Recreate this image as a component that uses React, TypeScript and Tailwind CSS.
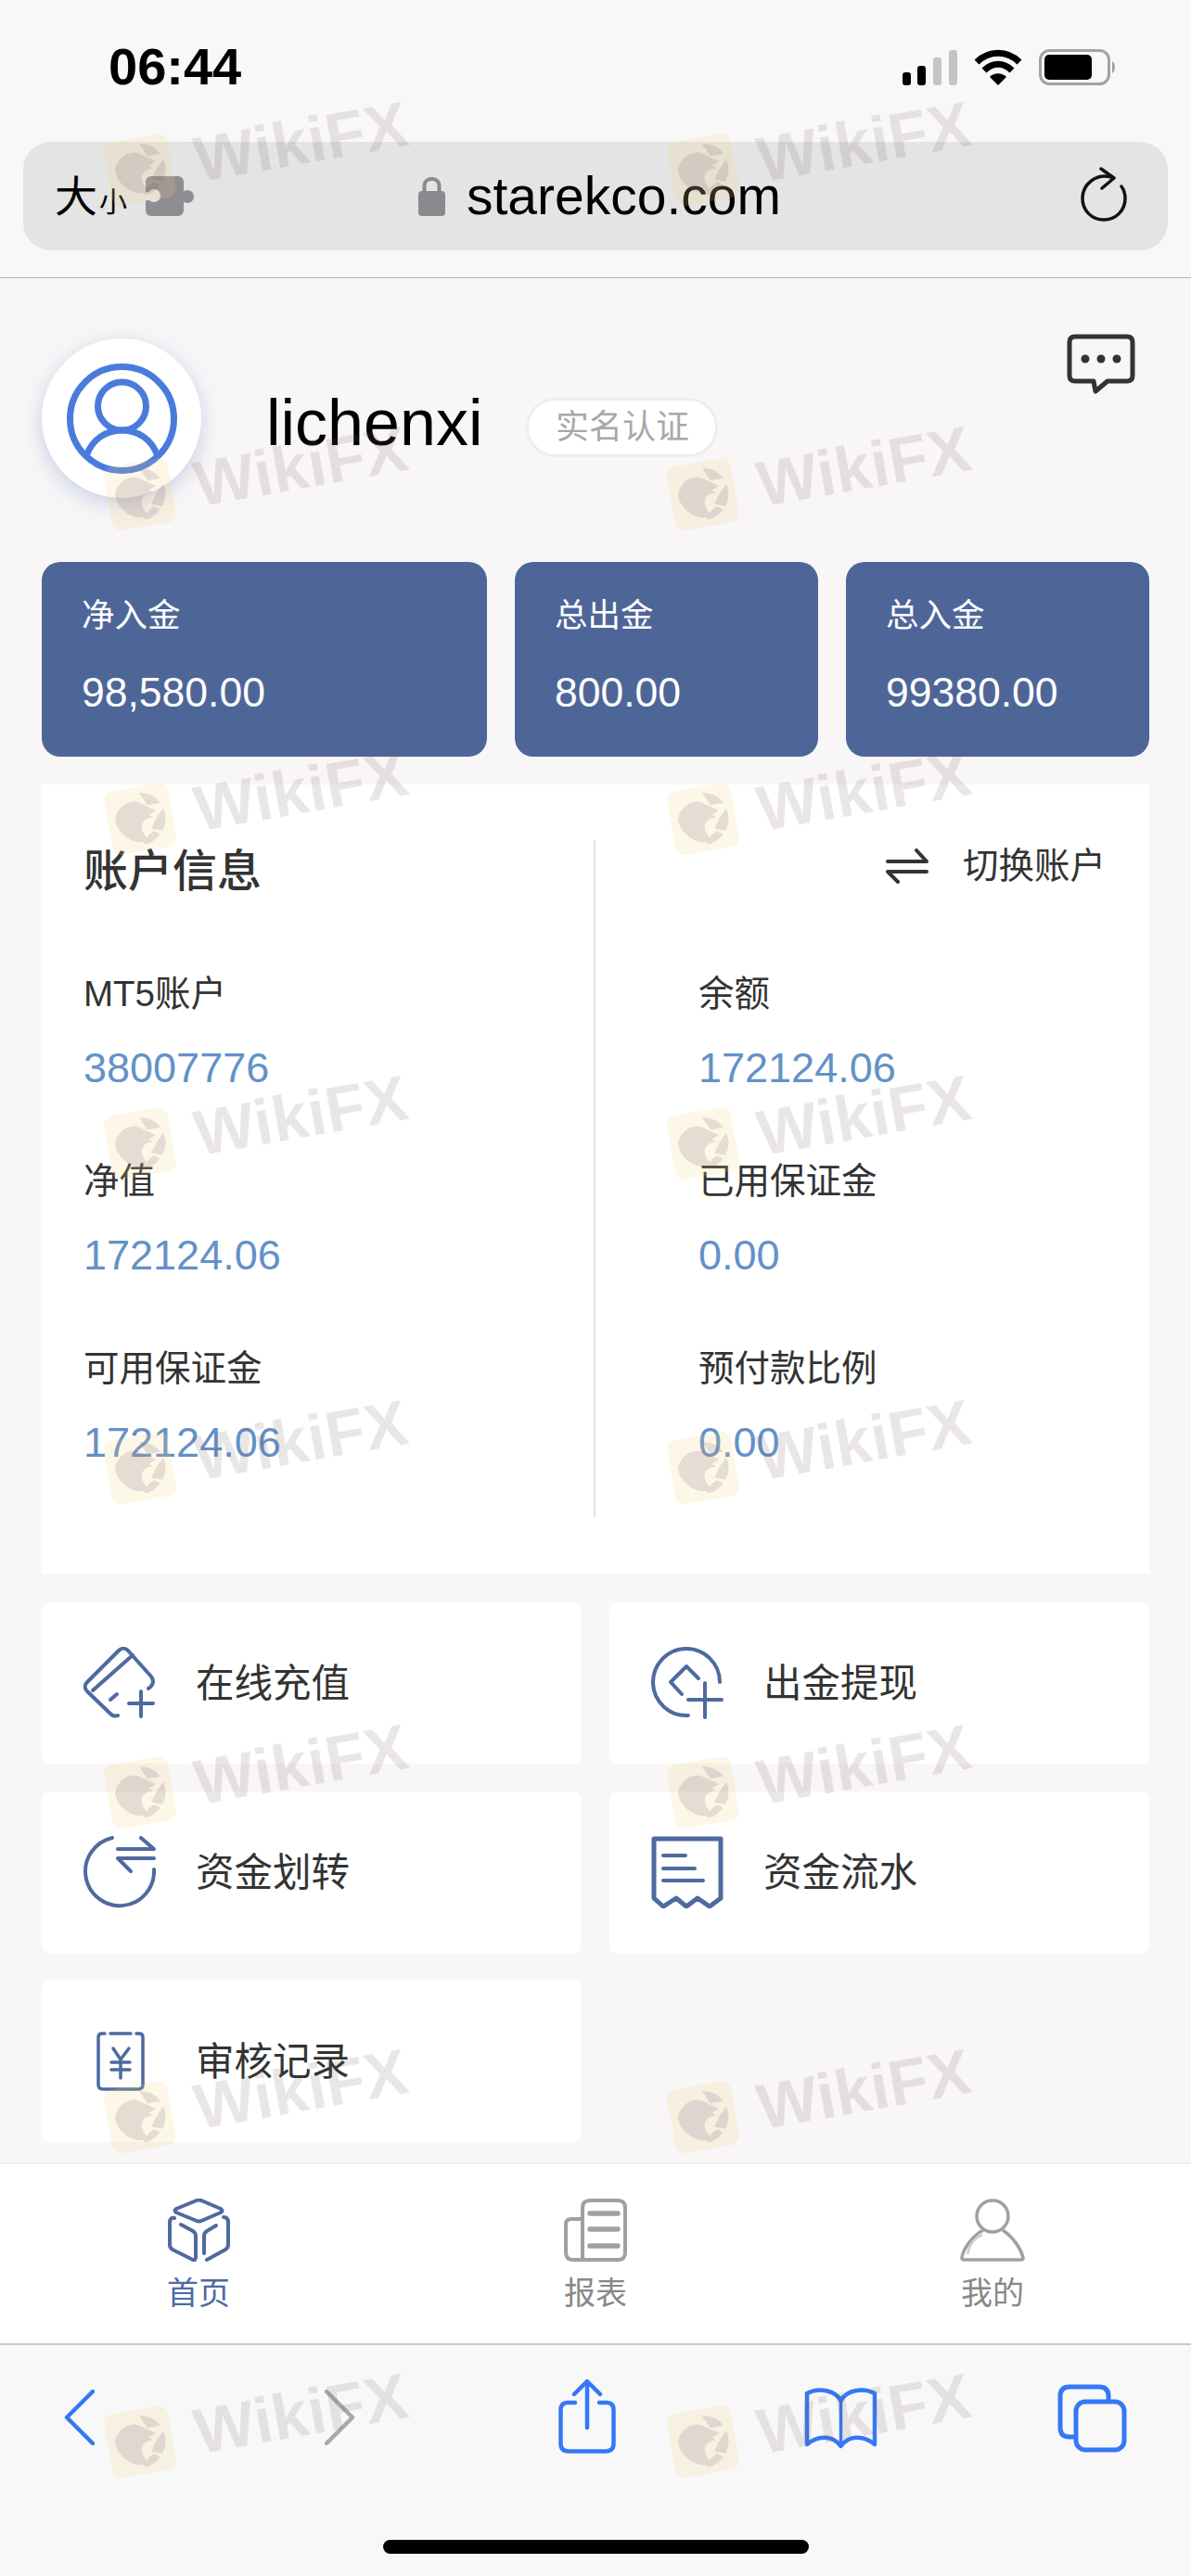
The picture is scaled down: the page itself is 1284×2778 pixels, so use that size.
import React from "react";

const BLUE = "#4e6a9f";

function Watermark() {
  return (
    <div className="flex h-[70px] w-[326px] rotate-[-10deg] items-center gap-[25px]">
      <svg width="70" height="70" viewBox="0 0 68 68" className="shrink-0">
        <rect width="68" height="68" rx="10" fill="#f5d278" fillOpacity="0.18" />
        <path
          d="M8 30 C12 18 26 11 36 17 L52 28 L44 31 L48 35 C40 33 34 38 34 44 C34 50 37 54 40 57 C28 62 14 52 9 38 Z M38 7 A27 27 0 0 1 58 21 L44 21 Z M60 27 A27 27 0 0 1 55 50 L44 46 L51 36 Z M52 53 A27 27 0 0 1 37 61 L33 60 L40 52 L46 49 Z"
          fill="#6e5a78"
          fillOpacity="0.17"
        />
      </svg>
      <span className="whitespace-nowrap text-[69px] leading-none font-bold tracking-[0.5px] text-[#785a5a]/15">WikiFX</span>
    </div>
  );
}

function Signal() {
  return (
    <svg width="59" height="39" viewBox="0 0 59 39">
      <rect x="0" y="25" width="9" height="14" rx="3" fill="#000" />
      <rect x="16" y="18" width="9" height="21" rx="3" fill="#000" />
      <rect x="33" y="9" width="9" height="30" rx="3" fill="#c4c4c4" />
      <rect x="50" y="1" width="9" height="38" rx="3" fill="#c4c4c4" />
    </svg>
  );
}

function Wifi() {
  return (
    <svg width="52" height="39" viewBox="0 0 52 39" fill="none" stroke="#000" strokeWidth="7">
      <path d="M3 14 C16 1 36 1 49 14" />
      <path d="M11 23 C20 14 32 14 41 23" />
      <path d="M26 39 L17 30 C22 25 30 25 35 30 Z" fill="#000" stroke="none" />
    </svg>
  );
}

function Battery() {
  return (
    <svg width="84" height="39" viewBox="0 0 84 39">
      <rect x="1.5" y="1.5" width="74" height="36" rx="10" fill="none" stroke="#a3a3a3" strokeWidth="3" />
      <rect x="6" y="6" width="51" height="27" rx="5" fill="#000" />
      <path d="M79 13 C83 15 83 24 79 26 Z" fill="#a3a3a3" />
    </svg>
  );
}

function Puzzle() {
  return (
    <svg width="52" height="43" viewBox="0 0 52 43">
      <rect width="41" height="43" rx="6" fill="#8e8d92" />
      <rect x="38" y="17" width="6" height="9" fill="#8e8d92" />
      <circle cx="45" cy="22" r="7" fill="#8e8d92" />
      <rect x="0" y="17" width="8" height="9" fill="#e4e4e4" />
      <circle cx="9" cy="21" r="7" fill="#e4e4e4" />
    </svg>
  );
}

function Lock() {
  return (
    <svg width="29" height="43" viewBox="0 0 29 43">
      <path d="M6.5 19 V10.5 C6.5 0.5 22.5 0.5 22.5 10.5 V19" fill="none" stroke="#8a898e" strokeWidth="4" />
      <rect y="16" width="29" height="27" rx="4" fill="#8a898e" />
    </svg>
  );
}

function Reload() {
  return (
    <svg width="50" height="60" viewBox="0 0 50 60" fill="none" stroke="#111" strokeWidth="3.5" strokeLinecap="round" strokeLinejoin="round">
      <path d="M33 11 C17 7 2 18 2 34 C2 47 12 57 25 57 C38 57 48 47 48 34 C48 29 47 25 44 21" />
      <path d="M22 2 L36 12 L23 23" />
    </svg>
  );
}

function Chat() {
  return (
    <svg width="74" height="65" viewBox="0 0 74 65" fill="none" stroke="#333" strokeWidth="5" strokeLinejoin="round">
      <path d="M9 3 H65 Q71 3 71 9 V45 Q71 51 65 51 H44 L31 62 L29 51 H9 Q3 51 3 45 V9 Q3 3 9 3 Z" />
      <circle cx="20" cy="27" r="4.5" fill="#333" stroke="none" />
      <circle cx="37" cy="27" r="4.5" fill="#333" stroke="none" />
      <circle cx="54" cy="27" r="4.5" fill="#333" stroke="none" />
    </svg>
  );
}

function AvatarIcon() {
  return (
    <svg width="119" height="119" viewBox="0 0 119 119" fill="none" stroke="#4a7bdc" strokeWidth="7">
      <circle cx="59.5" cy="59.5" r="56" />
      <ellipse cx="59.5" cy="46" rx="26" ry="26" />
      <path d="M21 100 C27 82 42 72 59.5 72 C77 72 92 82 98 100" />
    </svg>
  );
}

function Swap() {
  return (
    <svg width="46" height="38" viewBox="0 0 46 38" fill="none" stroke="#333" strokeWidth="4" strokeLinecap="round" strokeLinejoin="round">
      <path d="M2 14 H44 L33 2" />
      <path d="M44 25 H2 L13 36" />
    </svg>
  );
}

const iconStroke = { fill: "none", stroke: BLUE, strokeWidth: 4, strokeLinecap: "round" as const, strokeLinejoin: "round" as const };

function CardIcon() {
  return (
    <svg width="78" height="78" viewBox="0 0 78 78" {...iconStroke}>
      <path d="M70 45 C76 41 76 36 73 32 L48 4 C45 1 41 1 38 4 L4 38 C1 41 1 45 4 48 L30 73 C33 75 35 75 37 74" />
      <path d="M10 47 L53 9" />
      <path d="M29 57 L36 51" />
      <path d="M49 61 H75 M62 48 V75" />
    </svg>
  );
}

function WithdrawIcon() {
  return (
    <svg width="78" height="78" viewBox="0 0 78 78" {...iconStroke}>
      <path d="M74 38 A36 36 0 1 0 40 74" />
      <path d="M33 51 L21 38 L38 21 L51 34" />
      <path d="M40 57 H76 M58 39 V76" />
    </svg>
  );
}

function TransferIcon() {
  return (
    <svg width="78" height="78" viewBox="0 0 78 78" {...iconStroke}>
      <path d="M31 2 A37 37 0 1 0 76 36" />
      <path d="M37 14 H76 L62 2" />
      <path d="M76 24 H37 L51 38" />
    </svg>
  );
}

function ReceiptIcon() {
  return (
    <svg width="78" height="78" viewBox="0 0 78 78" {...iconStroke}>
      <path d="M3 3 H75 V67 L63 76 L50 67 L38 76 L27 67 L13 76 L3 67 Z" strokeWidth="5" />
      <path d="M13 21 H37 M13 35 H47 M13 48 H56" />
    </svg>
  );
}

function AuditIcon() {
  return (
    <svg width="52" height="64" viewBox="0 0 52 64" {...iconStroke} strokeWidth="3.5">
      <path d="M9 2 H6 Q2 2 2 6 V57 Q2 62 7 62 H45 Q50 62 50 57 V6 Q50 2 46 2 H43" />
      <path d="M15 2 H37" />
      <path d="M18 18 L26 30 L35 18 M16 33 H36 M16 41 H36 M26 30 V50" />
    </svg>
  );
}

function HomeTab() {
  return (
    <svg width="67" height="68" viewBox="0 0 67 68" fill="none" stroke={BLUE} strokeWidth="4" strokeLinecap="round" strokeLinejoin="round">
      <path d="M31 2 Q33 1 36 2 L57 11 Q60 13 57 15 L36 24 Q33 25 31 24 L9 15 Q6 13 9 11 Z" />
      <path d="M7 21 Q2 20 2 26 V50 Q2 53 5 55 L27 66 Q30 67 30 63 V40 Q30 37 27 35 L14 28" />
      <path d="M60 20 Q65 20 65 26 V50 Q65 53 62 55 L42 66" />
      <path d="M39 59 V40 Q39 37 42 35 L52 29" />
    </svg>
  );
}

function ReportTab() {
  return (
    <svg width="68" height="68" viewBox="0 0 68 68" fill="none" stroke="#a0a0a0" strokeWidth="4" strokeLinejoin="round">
      <path d="M20 66 V10 Q20 2 28 2 H58 Q66 2 66 10 V58 Q66 66 58 66 H10 Q2 66 2 58 V28 Q2 22 8 22 H20" />
      <path d="M28 16 H58 M28 33 H58 M28 51 H58" strokeWidth="5.5" strokeLinecap="round" />
    </svg>
  );
}

function MeTab() {
  return (
    <svg width="70" height="68" viewBox="0 0 70 68" fill="none" stroke="#a0a0a0" strokeWidth="3.5" strokeLinejoin="round">
      <ellipse cx="35" cy="19" rx="17" ry="17" />
      <path d="M25 34 C13 40 3 55 2 64 Q2 66 5 66 H65 Q68 66 68 64 C66 55 58 42 46 34" />
      <path d="M8 60 C10 50 16 42 24 39" stroke="#cfcfcf" strokeWidth="2.5" />
    </svg>
  );
}

const safari = { fill: "none", stroke: "#3478f6", strokeWidth: 4.5, strokeLinecap: "round" as const, strokeLinejoin: "round" as const };

function Back() {
  return (
    <svg width="33" height="60" viewBox="0 0 33 60" className="mt-[48px]" {...safari}>
      <path d="M31 2 L3 30 L31 58" />
    </svg>
  );
}

function Forward() {
  return (
    <svg width="33" height="60" viewBox="0 0 33 60" className="ml-[248px] mt-[48px]" {...safari} stroke="#a9a9a9">
      <path d="M2 2 L30 30 L2 58" />
    </svg>
  );
}

function Share() {
  return (
    <svg width="62" height="80" viewBox="0 0 62 80" className="ml-[219px] mt-[37px]" {...safari}>
      <path d="M31 52 V3 M17 16 L31 2 L45 16" />
      <path d="M18 25 H10 Q2.5 25 2.5 33 V69 Q2.5 77.5 11 77.5 H51 Q59.5 77.5 59.5 69 V33 Q59.5 25 52 25 H44" />
    </svg>
  );
}

function Book() {
  return (
    <svg width="79" height="66" viewBox="0 0 79 66" className="ml-[203px] mt-[46px]" {...safari}>
      <path d="M39.5 14 V62" strokeWidth="3.5" />
      <path d="M39.5 14 C34 3 16 -1 3 6 V61 C16 50 32 52 39.5 63 C47 52 63 50 76 61 V6 C63 -1 45 3 39.5 14 Z" />
    </svg>
  );
}

function Tabs() {
  return (
    <svg width="75" height="74" viewBox="0 0 75 74" className="ml-[194px] mt-[42px]" {...safari} strokeWidth="5">
      <path d="M17 57 H13 Q3 57 3 47 V13 Q3 3 13 3 H45 Q55 3 55 13 V18" />
      <rect x="20" y="19" width="52" height="52" rx="10" />
    </svg>
  );
}

function Stat({ label, value, className }: { label: string; value: string; className: string }) {
  return (
    <div className={`flex h-[210px] flex-col rounded-[20px] bg-[#4e6697] pl-[43px] text-white ${className}`}>
      <div className="mt-[38px] h-[40px] text-[35.5px] leading-[40px]">{label}</div>
      <div className="mt-[38px] h-[50px] text-[44.5px] leading-[50px]">{value}</div>
    </div>
  );
}

function Field({ label, value }: { label: string; value: string }) {
  return (
    <div className="mb-[74px] flex flex-col">
      <div className="mt-[1px] h-[48px] text-[38.5px] leading-[48px] text-[#333]">{label}</div>
      <div className="mt-[32px] -mb-[1px] h-[48px] text-[45px] leading-[48px] text-[#6391c8]">{value}</div>
    </div>
  );
}

function MenuItem({ icon, label, w }: { icon: React.ReactNode; label: string; w: string }) {
  return (
    <div className="flex h-[174px] items-center rounded-[8px] bg-white pl-[45px]">
      <div className={`flex h-[78px] items-center ${w}`}>{icon}</div>
      <span className="mt-[2px] text-[41.5px] leading-none text-[#333]">{label}</span>
    </div>
  );
}

function TabItem({ icon, label, color }: { icon: React.ReactNode; label: string; color: string }) {
  return (
    <div className="flex flex-col items-center pt-[37px]">
      {icon}
      <span className={`mt-[14px] text-[34px] leading-[40px] ${color}`}>{label}</span>
    </div>
  );
}

export default function App() {
  return (
    <div className="relative flex h-[2778px] w-[1284px] flex-col overflow-hidden bg-[#f8f6f7] font-['Liberation_Sans','Noto_Sans_CJK_SC',sans-serif]">
      <header className="h-[300px] shrink-0 border-b border-[#b5b5b5] bg-[#f9f8f9]">
        <div className="flex h-[144px] items-center pl-[117px]">
          <span className="text-[56px] leading-none font-bold text-black">06:44</span>
          <div className="ml-auto mr-[80px] flex items-center gap-[18px]">
            <Signal />
            <Wifi />
            <Battery />
          </div>
        </div>
        <div className="mx-[25px] mt-[9px] flex h-[117px] items-center rounded-[30px] bg-[#e4e4e4] pl-[34px]">
          <span className="w-[98px] text-black">
            <span className="text-[46px] leading-none">大</span>
            <span className="ml-[2px] text-[30px] leading-none">小</span>
          </span>
          <Puzzle />
          <div className="ml-[242px]">
            <Lock />
          </div>
          <span className="ml-[23px] text-[57px] leading-none text-black">starekco.com</span>
          <div className="ml-auto -mt-[3px] mr-[44px]">
            <Reload />
          </div>
        </div>
      </header>

      <main className="flex-1 px-[45px]">
        <div className="mt-[65px] flex h-[172px] items-center">
          <div className="flex h-[172px] w-[172px] items-center justify-center rounded-full bg-white shadow-[0_6px_22px_rgba(90,120,190,0.3)]">
            <AvatarIcon />
          </div>
          <span className="ml-[70px] mt-[10px] text-[70px] leading-none text-black">lichenxi</span>
          <span className="ml-[47px] mt-[20px] flex h-[64px] w-[207px] items-center justify-center rounded-full border-[3px] border-[#eeeef0] bg-white text-[36px] leading-none text-[#a8a8a8]">
            实名认证
          </span>
          <div className="ml-auto mr-[15px] -mt-[118px]">
            <Chat />
          </div>
        </div>

        <div className="mt-[69px] flex gap-[30px]">
          <Stat label="净入金" value="98,580.00" className="w-[480px]" />
          <Stat label="总出金" value="800.00" className="w-[327px] pl-[42px]" />
          <Stat label="总入金" value="99380.00" className="w-[327px] pl-[42px]" />
        </div>

        <section className="mt-[30px] flex h-[851px] items-start bg-white pt-[60px]">
          <div className="h-[730px] w-[595px] pl-[45px]">
            <div className="mb-[73px] h-[68px] text-[48px] leading-[68px] font-medium text-[#333]">账户信息</div>
            <Field label="MT5账户" value="38007776" />
            <Field label="净值" value="172124.06" />
            <Field label="可用保证金" value="172124.06" />
          </div>
          <div className="h-[730px] flex-1 border-l-2 border-[#e2e3e6] pl-[111px]">
            <div className="mb-[73px] flex h-[68px] items-start justify-end pr-[47px] pt-[9px]">
              <Swap />
              <span className="ml-[37px] text-[38.5px] leading-[38px] text-[#333]">切换账户</span>
            </div>
            <Field label="余额" value="172124.06" />
            <Field label="已用保证金" value="0.00" />
            <Field label="预付款比例" value="0.00" />
          </div>
        </section>

        <div className="mt-[31px] grid grid-cols-2 gap-[30px]">
          <MenuItem icon={<CardIcon />} label="在线充值" w="w-[121px]" />
          <MenuItem icon={<WithdrawIcon />} label="出金提现" w="w-[121px]" />
          <MenuItem icon={<TransferIcon />} label="资金划转" w="w-[121px]" />
          <MenuItem icon={<ReceiptIcon />} label="资金流水" w="w-[121px]" />
          <MenuItem icon={<div className="pl-[14px]"><AuditIcon /></div>} label="审核记录" w="w-[121px]" />
        </div>
      </main>

      <nav className="grid h-[197px] shrink-0 grid-cols-3 border-y-2 border-t-[#eceef0] border-b-[#c8c8c8] bg-white">
        <TabItem icon={<HomeTab />} label="首页" color="text-[#4e6a9f]" />
        <TabItem icon={<ReportTab />} label="报表" color="text-[#888]" />
        <TabItem icon={<MeTab />} label="我的" color="text-[#888]" />
      </nav>

      <footer className="h-[249px] shrink-0 bg-[#f8f8f9]">
        <div className="flex h-[210px] items-start pl-[69px]">
          <Back />
          <Forward />
          <Share />
          <Book />
          <Tabs />
        </div>
        <div className="mx-auto h-[15px] w-[459px] rounded-full bg-black" />
      </footer>

      <div className="pointer-events-none absolute inset-0 grid grid-cols-[607px_607px] grid-rows-[repeat(8,350px)] pl-[114px] pt-[126px]">
        {Array.from({ length: 16 }).map((_, i) => (
          <Watermark key={i} />
        ))}
      </div>
    </div>
  );
}
